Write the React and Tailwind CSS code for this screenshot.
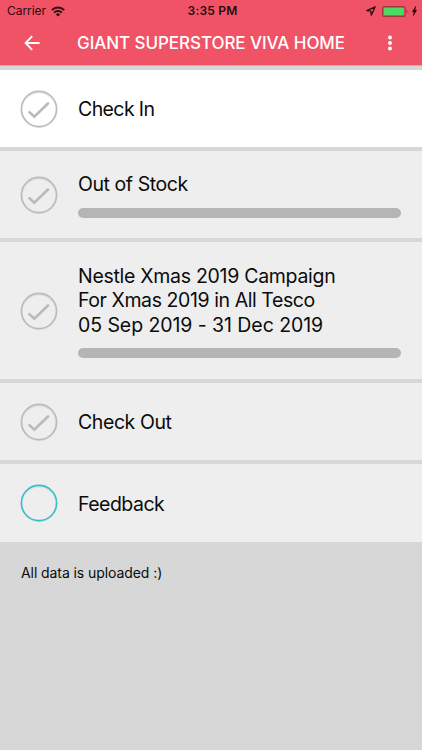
import React from 'react';
import { BsLightningChargeFill } from 'react-icons/bs';

const tasks = [
  {
    id: 'check-in',
    lines: [{ text: 'Check In', tracking: 'tracking-[-0.6px]' }],
    done: true,
    row: 'h-[77px] bg-white',
  },
  {
    id: 'stock',
    lines: [{ text: 'Out of Stock', tracking: 'tracking-[-0.43px]' }],
    done: true,
    progress: true,
    row: 'h-[87px] bg-[#eeeeee]',
  },
  {
    id: 'campaign',
    lines: [
      { text: 'Nestle Xmas 2019 Campaign', tracking: 'tracking-[-0.29px]' },
      { text: 'For Xmas 2019 in All Tesco', tracking: 'tracking-[-0.42px]' },
      { text: '05 Sep 2019 - 31 Dec 2019', tracking: 'tracking-[-0.07px]' },
    ],
    done: true,
    progress: true,
    row: 'h-[137px] bg-[#eeeeee]',
  },
  {
    id: 'check-out',
    lines: [{ text: 'Check Out', tracking: 'tracking-[-0.42px]' }],
    done: true,
    row: 'h-[77px] bg-[#eeeeee]',
  },
  {
    id: 'feedback',
    lines: [{ text: 'Feedback', tracking: 'tracking-[-0.52px]' }],
    done: false,
    row: 'h-[78px] bg-[#eeeeee]',
  },
];

function StatusCircle({ done }) {
  return (
    <svg className="w-10 h-10 shrink-0" viewBox="0 0 40 40" fill="none">
      <circle cx="20" cy="20.8" r="17.4" stroke="#000000" strokeOpacity="0.07" strokeWidth="2" />
      <circle cx="20" cy="20" r="17.6" stroke={done ? '#bcbcbc' : '#35bfcf'} strokeWidth="1.6" />
      {done && (
        <path d="M10.4 23.1l4.9 4.7L29 14.5" stroke="#bababa" strokeWidth="2.6" strokeLinecap="round" strokeLinejoin="miter" />
      )}
    </svg>
  );
}

function StatusBar() {
  return (
    <div className="h-[22px] grid grid-cols-3 items-center pl-[7px] pr-[4px] text-[#2b0c11]">
      <div className="flex items-center gap-[5px]">
        <span className="text-[12px] leading-none tracking-[-0.05px]">Carrier</span>
        <svg className="w-[14px] h-[11px]" viewBox="0 0 14 11" fill="none" stroke="currentColor" strokeWidth="1.9">
          <path d="M.8 4.1a8.8 8.8 0 0 1 12.4 0" />
          <path d="M3.1 6.6a5.5 5.5 0 0 1 7.8 0" />
          <path d="M7 10.5L4.9 8.4a3 3 0 0 1 4.2 0z" fill="currentColor" stroke="none" />
        </svg>
      </div>
      <span className="text-center text-[12px] leading-none font-semibold tracking-[0.2px]">3:35 PM</span>
      <div className="flex items-center justify-end">
        <svg className="w-[10px] h-[10px] mr-[6px]" viewBox="0 0 10 10" fill="none" stroke="currentColor" strokeWidth="1.3" strokeLinejoin="round">
          <path d="M9.2 .8L.8 4.7l4 .5.5 4z" />
        </svg>
        <svg className="w-[26px] h-[11px] mr-[3px]" viewBox="0 0 26 11">
          <rect x=".6" y=".6" width="22.6" height="9.8" rx="2" fill="none" stroke="#a03842" strokeWidth="1.1" />
          <rect x="2" y="2" width="19.8" height="7" rx="1" fill="#4cd964" />
          <path d="M24.3 3.8a1.8 1.8 0 0 1 0 3.4z" fill="#a03842" />
        </svg>
        <BsLightningChargeFill className="w-[7px] h-[10px]" preserveAspectRatio="none" />
      </div>
    </div>
  );
}

function Header() {
  return (
    <header className="h-[66px] bg-[#f05366] border-b border-[#e8a3ae]">
      <StatusBar />
      <div className="h-[42px] flex items-center pl-[24px] pr-[30px] text-white">
        <svg className="w-4 h-4 shrink-0" viewBox="0 0 16 16" fill="none" stroke="currentColor" strokeWidth="1.9">
          <path d="M8.2 1.2L1.6 8l6.6 6.8M1.6 8h14" />
        </svg>
        <h1 className="ml-[37px] flex-1 whitespace-nowrap text-[17px] leading-none font-medium tracking-[-0.06px]">
          GIANT SUPERSTORE VIVA HOME
        </h1>
        <svg className="w-1 h-4 shrink-0" viewBox="0 0 4 16" fill="currentColor">
          <circle cx="2" cy="2.4" r="2" />
          <circle cx="2" cy="8" r="2" />
          <circle cx="2" cy="13.6" r="2" />
        </svg>
      </div>
    </header>
  );
}

export default function App() {
  return (
    <div className="w-full h-screen overflow-hidden bg-[#d7d7d7] font-['Inter','Liberation_Sans',sans-serif] text-[#0b0b0b]">
      <Header />
      <main className="pt-1 flex flex-col gap-1">
        {tasks.map((task) => (
          <section key={task.id} className={`flex items-center pl-[19px] pr-[21px] ${task.row}`}>
            <StatusCircle done={task.done} />
            <div className={`ml-[19px] flex-1 ${task.progress ? 'pt-px' : 'pt-0.5'}`}>
              {task.lines.map((line) => (
                <p key={line.text} className={`whitespace-nowrap text-[19.5px] leading-[24.3px] ${line.tracking}`}>
                  {line.text}
                </p>
              ))}
              {task.progress && <div className="mt-[11px] h-[10px] rounded-full bg-[#b5b5b5]" />}
            </div>
          </section>
        ))}
      </main>
      <p className="pt-[21px] pl-[21px] text-[14px] leading-[20px] tracking-[-0.08px]">All data is uploaded :)</p>
    </div>
  );
}
